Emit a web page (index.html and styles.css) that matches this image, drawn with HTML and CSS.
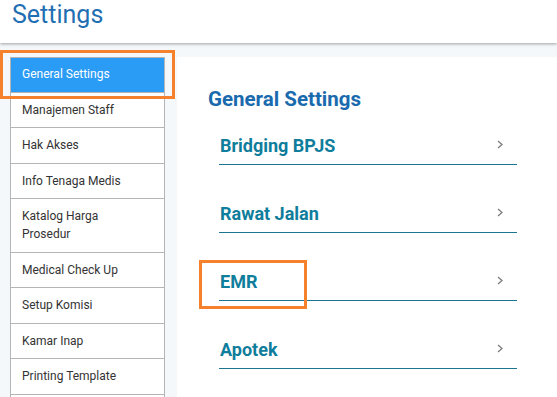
FILE: index.html
```html
<!doctype html>
<html>
<head>
	<title>Settings</title>
	<meta charset="utf-8">
	<link rel="stylesheet" href="styles.css">
</head>
<body>

	<div class="header">
		<h1>Settings</h1>
	</div>

	<div class="main">
		<ul class="menu">
			<li class="active">General Settings<span class="mark"></span></li>
			<li>Manajemen Staff</li>
			<li>Hak Akses</li>
			<li>Info Tenaga Medis</li>
			<li>Katalog Harga Prosedur</li>
			<li>Medical Check Up</li>
			<li>Setup Komisi</li>
			<li>Kamar Inap</li>
			<li>Printing Template</li>
		</ul>

		<div class="panel">
			<h2>General Settings</h2>
			<a class="row" href="#">Bridging BPJS
				<svg width="6" height="9" viewBox="0 0 6 9"><polyline points="1,1 5,4.5 1,8" /></svg>
			</a>
			<a class="row" href="#">Rawat Jalan
				<svg width="6" height="9" viewBox="0 0 6 9"><polyline points="1,1 5,4.5 1,8" /></svg>
			</a>
			<a class="row" href="#">EMR<span class="mark emr"></span>
				<svg width="6" height="9" viewBox="0 0 6 9"><polyline points="1,1 5,4.5 1,8" /></svg>
			</a>
			<a class="row" href="#">Apotek
				<svg width="6" height="9" viewBox="0 0 6 9"><polyline points="1,1 5,4.5 1,8" /></svg>
			</a>
		</div>
	</div>

</body>
</html>
```

FILE: styles.css
```css
* {
	box-sizing: border-box;
}
html, body {
	height: 100%;
}
body {
	margin: 0;
	overflow: hidden;
	background: #f4f8fb;
	font-family: Roboto, "Liberation Sans", Arial, sans-serif;
}
.header {
	position: relative;
	z-index: 1;
	height: 43px;
	padding: 0 12px;
	background: #fff;
	box-shadow: 0 1px 3px rgba(0,0,0,0.35);
}
h1 {
	margin: 0;
	font-size: 25px;
	font-weight: 400;
	line-height: 30px;
	color: #1f6fb2;
}
.main {
	display: grid;
	grid-template-columns: 155px 1fr;
	column-gap: 12px;
	padding: 14px 0 0 10px;
	height: calc(100% - 43px);
}
.menu {
	margin: 0;
	padding: 0;
	list-style: none;
	border-left: 1px solid #b5b5b5;
	border-right: 1px solid #b5b5b5;
	background: #fff;
}
.menu li {
	position: relative;
	padding: 8px 20px 8.5px 11px;
	border-bottom: 1px solid #b5b5b5;
	font-size: 12px;
	line-height: 18px;
	color: #333;
}
.menu li.active {
	color: #fff;
	background: #2b9cf5;
	border-top: 1px solid #b5b5b5;
	padding-top: 7px;
}
.mark {
	position: absolute;
	border: 3px solid #f5812c;
}
.menu .mark {
	top: -8px;
	bottom: -7px;
	left: -11px;
	right: -11px;
}
.panel {
	background: #fff;
	padding: 31px 0 0 31px;
}
h2 {
	margin: 0 0 26px;
	font-size: 20.5px;
	font-weight: 700;
	line-height: 22px;
	color: #1a6aae;
}
.row {
	position: relative;
	display: flex;
	justify-content: space-between;
	align-items: center;
	width: 298px;
	margin: 0 0 39px 11px;
	padding: 0 14px 8px 1px;
	border-bottom: 1px solid #1d7592;
	font-size: 18px;
	font-weight: 700;
	line-height: 20px;
	color: #0f7d9c;
	text-decoration: none;
}
.row svg {
	margin-top: -3px;
	fill: none;
	stroke: #777;
	stroke-width: 1.2;
}
.row .emr {
	top: -12px;
	left: -20px;
	width: 108px;
	height: 49px;
}
```
